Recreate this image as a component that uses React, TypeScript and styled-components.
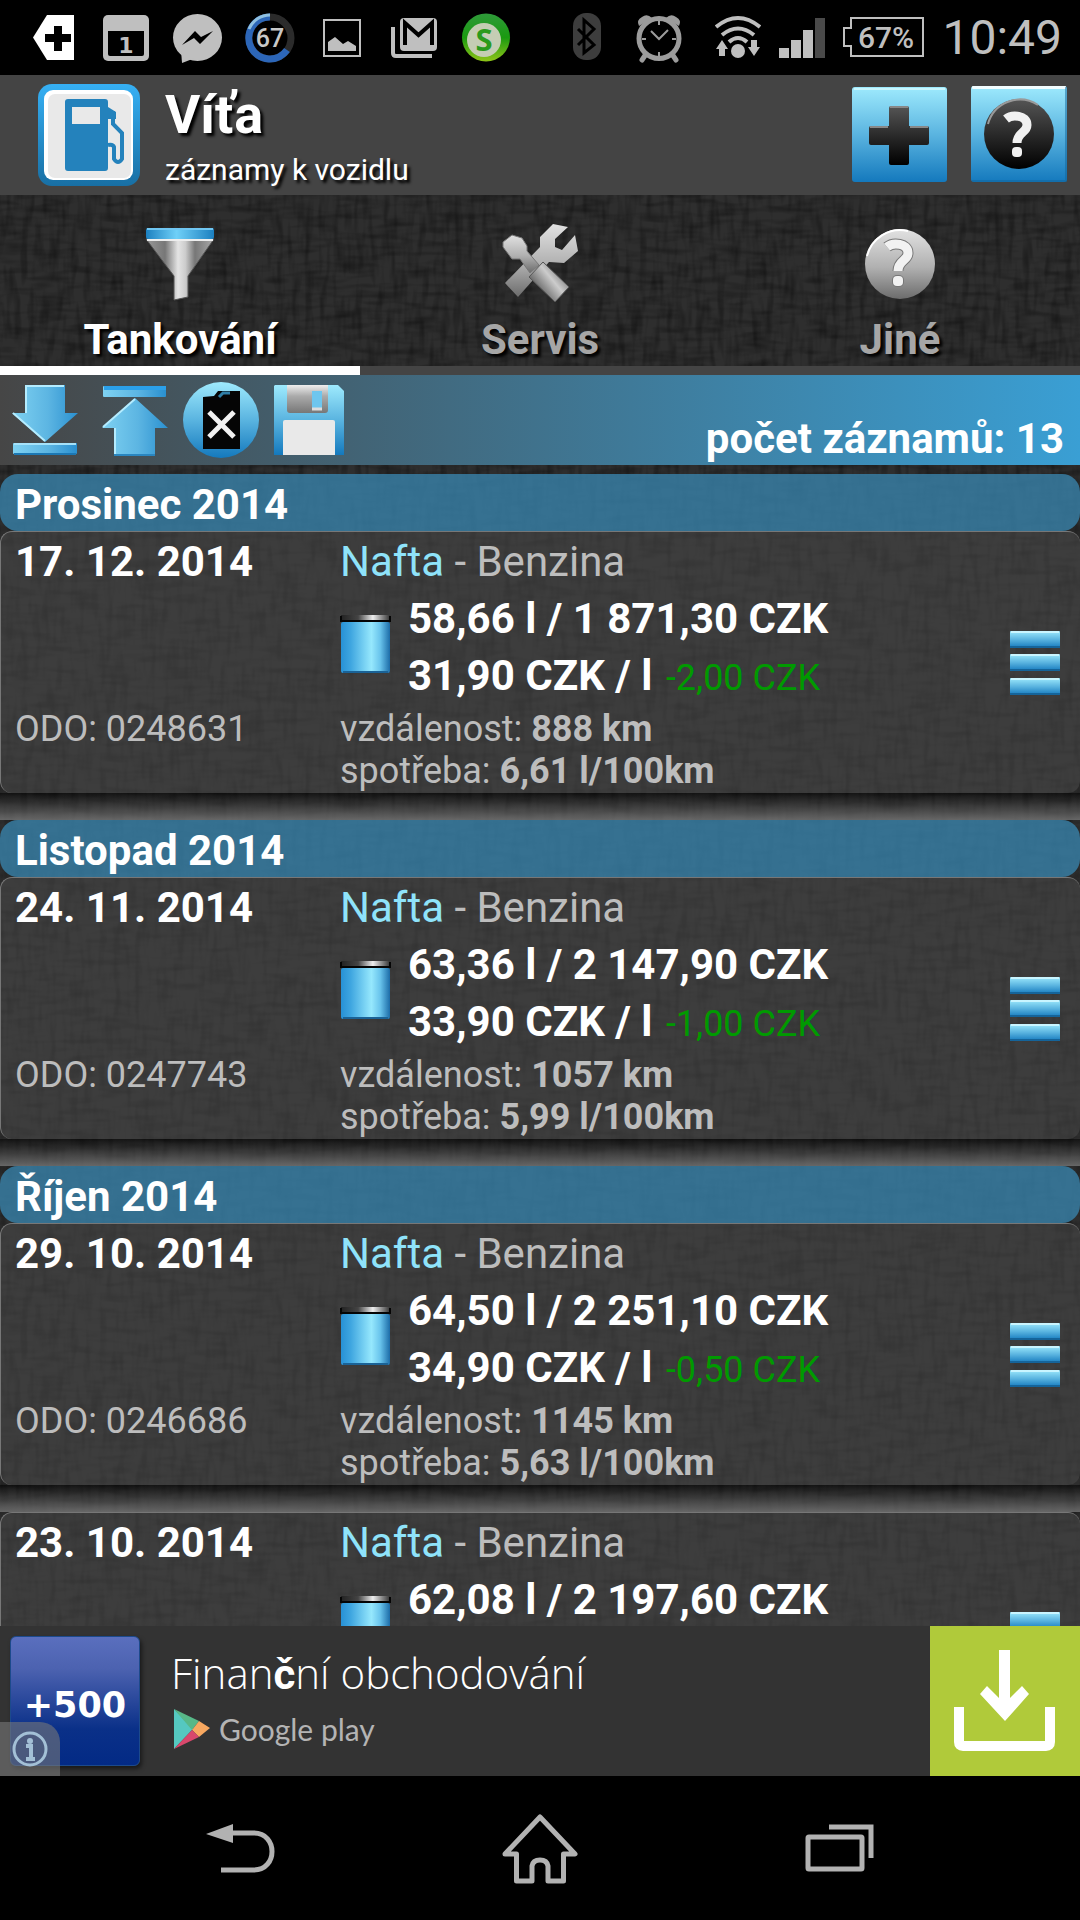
import React from "react";
import styled, { createGlobalStyle } from "styled-components";

const weave = encodeURIComponent(
  `<svg xmlns="http://www.w3.org/2000/svg" width="540" height="540">
    <filter id="h" x="0" y="0" width="100%" height="100%">
      <feTurbulence type="fractalNoise" baseFrequency="0.03 0.14" numOctaves="2" seed="4" stitchTiles="stitch"/>
      <feColorMatrix values="0 0 0 0 0  0 0 0 0 0  0 0 0 0 0  2.4 0 0 0 -1.05"/>
    </filter>
    <filter id="v" x="0" y="0" width="100%" height="100%">
      <feTurbulence type="fractalNoise" baseFrequency="0.14 0.03" numOctaves="2" seed="9" stitchTiles="stitch"/>
      <feColorMatrix values="0 0 0 0 0  0 0 0 0 0  0 0 0 0 0  2.4 0 0 0 -1.05"/>
    </filter>
    <rect width="540" height="540" fill="#2e2e2e"/>
    <rect width="540" height="540" filter="url(#h)" opacity="0.32"/>
    <rect width="540" height="540" filter="url(#v)" opacity="0.32"/>
  </svg>`
);

const GlobalStyle = createGlobalStyle`
  * { box-sizing: border-box; }
  body { margin: 0; background: #000; }
  h1, h2, p { margin: 0; font-weight: inherit; }
  button { border: 0; padding: 0; background: none; color: inherit; font: inherit; cursor: pointer; }
  svg { display: block; flex: none; }
`;

const Screen = styled.div`
  height: 100vh;
  display: flex;
  flex-direction: column;
  overflow: hidden;
  color: #fff;
  background: #2a2a2a url("data:image/svg+xml,${weave}");
  font-family: Roboto, "Noto Sans", sans-serif;
  font-size: 42px;
`;

const StatusBar = styled.div`
  flex: none;
  height: 75px;
  display: flex;
  align-items: center;
  padding: 0 18px;
  background: #000;
`;

const StatusGroup = styled.div<{ $gap: number }>`
  display: flex;
  align-items: center;
  gap: ${(p) => p.$gap}px;
`;

const SystemTray = styled.div`
  flex: 1;
  display: flex;
  justify-content: flex-end;
  gap: 33px;
`;

const Clock = styled.time`
  color: #bfbfbf;
  font-size: 48px;
  line-height: 75px;
`;

const Header = styled.header`
  flex: none;
  display: flex;
  align-items: flex-start;
  height: 120px;
  padding: 8px 13px 0 38px;
  background: #444;
`;

const Titles = styled.div`
  flex: 1;
  display: flex;
  flex-direction: column;
  gap: 5px;
  padding-left: 25px;
  text-shadow: 3px 3px 3px #000;
`;

const Title = styled.h1`
  font-size: 54px;
  line-height: 64px;
  font-weight: 700;
`;

const Subtitle = styled.p`
  font-size: 30px;
  line-height: 36px;
`;

const HeaderButton = styled.button`
  margin: 3px 0 0 24px;
`;

const Tabs = styled.nav`
  flex: none;
  display: flex;
`;

const Tab = styled.button<{ $active?: boolean }>`
  flex: 1;
  display: flex;
  flex-direction: column;
  align-items: center;
  gap: 7px;
  padding-top: 27px;
  border-bottom: 9px solid ${(p) => (p.$active ? "#fff" : "#444")};
  color: ${(p) => (p.$active ? "#fff" : "#a6a6a6")};
  font-weight: 700;
  line-height: 53px;
  text-shadow: 3px 3px 3px #000;
`;

const Toolbar = styled.div`
  flex: none;
  display: flex;
  align-items: center;
  height: 90px;
  padding: 0 16px 0 0;
  background: linear-gradient(90deg, #464646, #3a9fd4);
`;

const Count = styled.p`
  flex: 1;
  align-self: flex-end;
  text-align: right;
  font-weight: 700;
  line-height: 53px;
`;

const List = styled.main`
  flex: 1;
  min-height: 0;
  overflow: hidden;
  padding-top: 9px;
`;

const Month = styled.h2`
  padding: 4px 15px 0;
  border-radius: 18px;
  background: rgba(56, 130, 170, 0.8);
  font-size: 42px;
  font-weight: 700;
  line-height: 53px;
`;

const Card = styled.article`
  display: flex;
  min-height: 262px;
  padding: 1px 20px 1px 14px;
  border-top: 1px solid #777;
  border-left: 1px solid #777;
  border-radius: 12px;
  background: rgba(74, 74, 74, 0.55);
  color: #bdbdbd;
`;

const CardShadow = styled.div`
  height: 27px;
  background: linear-gradient(rgba(0, 0, 0, 0.55), rgba(56, 56, 56, 0.5) 38%, rgba(118, 118, 118, 0.8));
`;

const DateColumn = styled.div`
  flex: 0 0 325px;
  display: flex;
  flex-direction: column;
  justify-content: space-between;
  padding-bottom: 42px;
`;

const Strong = styled.p`
  color: #fff;
  font-weight: 700;
  line-height: 57px;
`;

const Small = styled.p`
  font-size: 36px;
  line-height: 42px;
`;

const Details = styled.div`
  flex: 1;
`;

const Station = styled.p`
  line-height: 57px;
`;

const Fuel = styled.span`
  color: #8fe3fa;
`;

const Purchase = styled.div`
  display: flex;
  gap: 14px;
  margin-bottom: 4px;
`;

const JarSlot = styled.div`
  padding-top: 22px;
`;

const Delta = styled.span`
  margin-left: 3px;
  color: #009a00;
  font-size: 36px;
  font-weight: 400;
  line-height: 36px;
`;

const MenuButton = styled.button`
  align-self: center;
`;

const Ad = styled.aside`
  position: relative;
  flex: none;
  display: flex;
  height: 150px;
  background: #333;
`;

const AdIcon = styled.div`
  display: flex;
  align-items: center;
  justify-content: center;
  width: 130px;
  height: 130px;
  margin: 10px 31px 0 10px;
  padding-top: 8px;
  border: 1px solid #1c4a8c;
  border-radius: 6px;
  background: linear-gradient(#5a6fbe 0%, #4c62b0 25%, #0a3088 72%, #032a85 100%);
  box-shadow: 2px 3px 4px rgba(0, 0, 0, 0.5);
  font-family: "DejaVu Sans", sans-serif;
  font-size: 35px;
  font-weight: 700;
`;

const AdText = styled.div`
  flex: 1;
  display: flex;
  flex-direction: column;
  gap: 6px;
  padding-top: 20px;
`;

const AdTitle = styled.p`
  font-family: "Open Sans", sans-serif;
  font-size: 42px;
  font-weight: 300;
  line-height: 54px;
`;

const Caron = styled.span`
  font-family: Roboto, sans-serif;
  font-weight: 700;
`;

const Store = styled.p`
  display: flex;
  align-items: center;
  gap: 8px;
  padding-left: 2px;
  color: #b4b4b4;
  font-family: Lato, sans-serif;
  font-size: 30px;
  line-height: 38px;
`;

const Download = styled.button`
  width: 150px;
  background: #b0ca3a;
`;

const AdInfo = styled.button`
  position: absolute;
  left: 0;
  bottom: 0;
  width: 60px;
  height: 54px;
  padding-left: 11px;
  border-radius: 0 20px 0 0;
  background: rgba(120, 120, 120, 0.6);
`;

const NavBar = styled.nav`
  flex: none;
  display: flex;
  height: 144px;
  padding: 0 90px;
  background: #000;
`;

const NavButton = styled.button`
  flex: 1;
  display: flex;
  align-items: center;
  justify-content: center;
`;

const HiddenDefs = styled.svg`
  position: absolute;
`;

/* Shared gradients for the glossy icons */
const Gradients = () => (
  <HiddenDefs width="0" height="0" aria-hidden="true">
    <defs>
      <linearGradient id="sky" x1="0" y1="0" x2="0" y2="1">
        <stop offset="0" stopColor="#9eeafd" />
        <stop offset=".5" stopColor="#5ab4e0" />
        <stop offset="1" stopColor="#1479bd" />
      </linearGradient>
      <linearGradient id="skyH" x1="0" y1="0" x2="1" y2="0">
        <stop offset="0" stopColor="#7fd2f2" />
        <stop offset=".55" stopColor="#5cb5e2" />
        <stop offset="1" stopColor="#2a90d0" />
      </linearGradient>
      <linearGradient id="jar" x1="0" y1="0" x2="1" y2="0">
        <stop offset="0" stopColor="#2791d6" />
        <stop offset=".2" stopColor="#3fa6e0" />
        <stop offset=".62" stopColor="#96e8fd" />
        <stop offset=".8" stopColor="#69c4ec" />
        <stop offset="1" stopColor="#1c6ca8" />
      </linearGradient>
      <linearGradient id="lid" x1="0" y1="0" x2="1" y2="0">
        <stop offset="0" stopColor="#222" />
        <stop offset=".35" stopColor="#444" />
        <stop offset=".65" stopColor="#eee" />
        <stop offset="1" stopColor="#333" />
      </linearGradient>
      <linearGradient id="ink" x1="0" y1="0" x2="0" y2="1">
        <stop offset="0" stopColor="#555" />
        <stop offset=".5" stopColor="#2a2a2a" />
        <stop offset="1" stopColor="#000" />
      </linearGradient>
      <linearGradient id="steelH" x1="0" y1="0" x2="1" y2="0">
        <stop offset="0" stopColor="#999" />
        <stop offset=".28" stopColor="#777" />
        <stop offset=".47" stopColor="#e4e4e4" />
        <stop offset=".58" stopColor="#ccc" />
        <stop offset=".72" stopColor="#777" />
        <stop offset="1" stopColor="#aaa" />
      </linearGradient>
      <linearGradient id="steel" x1="0" y1="0" x2="0" y2="1">
        <stop offset="0" stopColor="#e2e2e2" />
        <stop offset=".55" stopColor="#b0b0b0" />
        <stop offset="1" stopColor="#6c6c6c" />
      </linearGradient>
      <linearGradient id="handle" gradientUnits="userSpaceOnUse" x1="536" y1="290" x2="563" y2="268">
        <stop offset="0" stopColor="#5c5c5c" />
        <stop offset=".55" stopColor="#ccc" />
        <stop offset="1" stopColor="#6a6a6a" />
      </linearGradient>
      <linearGradient id="band" x1="0" y1="0" x2="1" y2="0">
        <stop offset="0" stopColor="#1c80c0" />
        <stop offset=".45" stopColor="#6fd0f8" />
        <stop offset="1" stopColor="#1c80c0" />
      </linearGradient>
      <linearGradient id="frame" x1="0" y1="0" x2="0" y2="1">
        <stop offset="0" stopColor="#36b0f4" />
        <stop offset="1" stopColor="#186fa4" />
      </linearGradient>
      <linearGradient id="shutter" x1="0" y1="0" x2="0" y2="1">
        <stop offset="0" stopColor="#eee" />
        <stop offset=".4" stopColor="#aaa" />
        <stop offset="1" stopColor="#777" />
      </linearGradient>
      <linearGradient id="lime" x1="0" y1="0" x2="0" y2="1">
        <stop offset="0" stopColor="#2f9a3a" />
        <stop offset=".5" stopColor="#1a9a10" />
        <stop offset="1" stopColor="#8fc418" />
      </linearGradient>
    </defs>
  </HiddenDefs>
);

/* Each icon is drawn in screen units; the viewBox selects its slot. */
type IconProps = { x: number; y: number; w: number; h: number; children: React.ReactNode };
const Icon = ({ x, y, w, h, children }: IconProps) => (
  <svg width={w} height={h} viewBox={`${x} ${y} ${w} ${h}`} aria-hidden="true">
    {children}
  </svg>
);

const questionPath = "M-11 -14C-5 -19 10 -18 10 -8C10 0 0 -1 0 10";

const StatusIcons = () => (
  <StatusGroup $gap={0}>
    <Icon x={18} y={0} w={72} h={75}>
      <path d="M47 15H74V60H47L33 37.500z" fill="#fff" />
      <path d="M54 26h8v8h9v8h-9v9h-8v-9h-9v-8h9z" fill="#000" />
    </Icon>
    <Icon x={90} y={0} w={72} h={75}>
      <rect x="103" y="15" width="46" height="46" rx="5" fill="#bfbfbf" />
      <path d="M108 31h36v23q0 2-2 2h-32q-2 0-2-2z" fill="#000" />
      <text x="126" y="53" textAnchor="middle" fontFamily="DejaVu Sans" fontWeight="700" fontSize="22" fill="#bfbfbf">1</text>
    </Icon>
    <Icon x={162} y={0} w={72} h={75}>
      <ellipse cx="197.500" cy="37.500" rx="24.500" ry="23.500" fill="#bfbfbf" />
      <path d="M181 50L182 63L195 58z" fill="#bfbfbf" />
      <path d="M182 45L195 31L201 37L213 31L200 44L194 38z" fill="#000" />
    </Icon>
    <Icon x={234} y={0} w={72} h={75}>
      <circle cx="270" cy="38" r="21" fill="#000" stroke="#2b2b2b" strokeWidth="7" />
      <path d="M270 17A21 21 0 1 0 287 50" fill="none" stroke="#2c66b8" strokeWidth="7" />
      <path d="M270 15A23 23 0 0 0 249 29" fill="none" stroke="#8fc0e0" strokeWidth="3" />
      <text x="270" y="47" textAnchor="middle" fontFamily="Roboto" fontSize="25" fontWeight="500" fill="#c8c8c8">67</text>
    </Icon>
    <Icon x={306} y={0} w={72} h={75}>
      <rect x="324" y="20" width="36" height="36" fill="none" stroke="#bfbfbf" strokeWidth="2" />
      <path d="M328 51V42L335 37L343 44L348 41L356 46V51z" fill="#bfbfbf" />
    </Icon>
    <Icon x={378} y={0} w={72} h={75}>
      <path d="M393 27V53q0 3 3 3H432" fill="none" stroke="#bfbfbf" strokeWidth="4" />
      <rect x="400" y="18" width="37" height="33" rx="4" fill="#bfbfbf" />
      <path d="M405 45V23L418.500 35L432 23V45" fill="none" stroke="#000" strokeWidth="4" />
    </Icon>
    <Icon x={450} y={0} w={72} h={75}>
      <circle cx="486" cy="37.500" r="24" fill="url(#lime)" />
      <circle cx="484" cy="40" r="17" fill="#c5cdb4" />
      <text x="484" y="51" textAnchor="middle" fontFamily="Open Sans" fontWeight="700" fontSize="31" fill="#2a9a1c">S</text>
    </Icon>
  </StatusGroup>
);

const SystemIcons = () => (
  <SystemTray>
    <StatusGroup $gap={35}>
      <Icon x={570} y={0} w={28} h={75}>
        <rect x="570" y="13" width="28" height="47" rx="13" fill="#3d3d3d" />
        <path d="M575 29L591 45L581 53V20L591 29L575 45" fill="none" stroke="#000" strokeWidth="3" />
      </Icon>
      <Icon x={633} y={0} w={46} h={75}>
        <path d="M636 26q-3-6 3-9q5-4 10 1zM676 26q3-6-3-9q-5-4-10 1z" fill="#9c9c9c" />
        <circle cx="656" cy="38.500" r="20" fill="none" stroke="#9c9c9c" strokeWidth="5" />
        <path d="M643 54l-4 6M669 54l4 6" stroke="#9c9c9c" strokeWidth="5" strokeLinecap="round" />
        <path d="M648 31l8 8l9-9M656 21v4M656 52v4M639 39h4M669 39h4" fill="none" stroke="#9c9c9c" strokeWidth="2" />
      </Icon>
    </StatusGroup>
    <StatusGroup $gap={18}>
      <Icon x={712} y={0} w={46} h={75}>
        <path d="M713 27Q735 9 757 27M719 35Q735 22 751 35M726 42Q735 34 744 42" fill="none" stroke="#bfbfbf" strokeWidth="4" />
        <circle cx="735" cy="51" r="7" fill="#bfbfbf" />
        <path d="M719 40l6 9h-3v7h-6v-7h-3zM751 56l6-9h-3v-7h-6v7h-3z" fill="#bfbfbf" />
      </Icon>
      <Icon x={777} y={0} w={46} h={75}>
        <path d="M777 48h10v10h-10zM789 40h10v18h-10zM801 30h10v28h-10z" fill="#bfbfbf" />
        <path d="M813 18h10v40h-10z" fill="#4a4a4a" />
      </Icon>
      <Icon x={841} y={0} w={99} h={75}>
        <path d="M849 18H921V56H849V46H842V28H849z" fill="none" stroke="#bfbfbf" strokeWidth="2" />
        <text x="884" y="48" textAnchor="middle" fontFamily="Roboto" fontWeight="500" fontSize="30" fill="#bfbfbf">67%</text>
      </Icon>
      </StatusGroup>
  </SystemTray>
);

const PumpLogo = () => (
  <Icon x={39} y={83} w={102} h={104}>
    <rect x="39" y="84" width="102" height="102" rx="14" fill="url(#frame)" />
    <rect x="45" y="90" width="89" height="90" rx="9" fill="#fff" />
    <rect x="49" y="94" width="83" height="84" rx="7" fill="#e9e9e9" />
    <path fillRule="evenodd" d="M69 99H106q3 0 3 3V168q0 3-3 3H69q-3 0-3-3V102q0-3 3-3zM73 107V124H101V107z" fill="#2482bc" />
    <path d="M109 113H114V124L123 133V159Q119 165 115 159V147Q114 144 109 145" fill="none" stroke="#2482bc" strokeWidth="4" />
    <path d="M109 107L117 112V119H109z" fill="#2482bc" />
  </Icon>
);

const PlusTile = () => (
  <Icon x={852} y={86} w={95} h={96}>
    <rect x="852" y="87" width="95" height="95" rx="3" fill="url(#sky)" />
    <rect x="854" y="88" width="91" height="2" fill="#c8f6ff" />
    <path d="M890 106H907q2 0 2 2V126H927q2 0 2 2V143q0 2-2 2H909V163q0 2-2 2H891q-2 0-2-2V145H871q-2 0-2-2V128q0-2 2-2H889V108q0-2 2-2z" fill="url(#ink)" />
    <path d="M890 107H908M870 127H888M910 127H928" stroke="#888" strokeWidth="2" />
  </Icon>
);

const HelpTile = () => (
  <Icon x={971} y={86} w={96} h={96}>
    <rect x="971" y="86" width="96" height="96" rx="3" fill="url(#sky)" />
    <rect x="972" y="86" width="94" height="3" rx="1" fill="#f2fdff" />
    <path d="M1066 87V181H972" fill="none" stroke="#126399" strokeWidth="2" opacity=".5" />
    <circle cx="1019" cy="134" r="35" fill="url(#ink)" />
    <path d="M988 124A33 33 0 0 1 1038 105" fill="none" stroke="#999" strokeWidth="2" />
    <g transform="translate(1017 133)">
      <path d={questionPath} fill="none" stroke="#f1f1f1" strokeWidth="9" />
      <rect x="-5" y="14" width="10" height="10" rx="4" fill="#f1f1f1" />
    </g>
  </Icon>
);

const Funnel = () => (
  <Icon x={138} y={222} w={84} h={84}>
    <path d="M146 239H214L188 276V297L174 300V276z" fill="url(#steelH)" stroke="#555" strokeWidth="1" />
    <path d="M147 240H213" stroke="#eee" strokeWidth="2" />
    <rect x="146" y="228" width="68" height="11" rx="2" fill="url(#band)" />
    <path d="M147 229H213" stroke="#6fc6f2" strokeWidth="2" />
  </Icon>
);

const Tools = () => (
  <Icon x={498} y={222} w={84} h={84}>
    <path d="M553 224L568 227L555 239V247L562 250L575 235L578 251L564 263L549 262L518 297L505 283L540 247V237z" fill="url(#steel)" />
    <path d="M512 235L522 238L527 246V251L539 265L530 273L520 259H512L503 247V242z" fill="url(#steel)" stroke="#777" strokeWidth="1" />
    <path d="M543 262L569 287L555 302L529 277z" fill="url(#handle)" stroke="#555" strokeWidth="1" />
  </Icon>
);

const OtherBadge = () => (
  <Icon x={858} y={222} w={84} h={84}>
    <circle cx="900" cy="264" r="35" fill="url(#steel)" />
    <path d="M867 256A34 34 0 0 1 908 231" fill="none" stroke="#fff" strokeWidth="2" />
    <g transform="translate(898 261)">
      <path d={questionPath} fill="none" stroke="#777" strokeWidth="11" />
      <rect x="-6" y="14" width="12" height="12" rx="5" fill="#777" />
      <path d={questionPath} fill="none" stroke="#f2f2f2" strokeWidth="9" />
      <rect x="-5" y="15" width="10" height="10" rx="4" fill="#f2f2f2" />
    </g>
  </Icon>
);

const ArrowDown = () => (
  <Icon x={0} y={375} w={90} h={90}>
    <path d="M25 385H65V413H78L45 442L12 413H25z" fill="url(#skyH)" />
    <path d="M26 413V386H64M13 413L45 441" fill="none" stroke="#b4ecff" strokeWidth="2" />
    <rect x="13" y="443" width="64" height="11" rx="1" fill="url(#skyH)" />
    <path d="M14 444H76" stroke="#a5e2fa" strokeWidth="2" />
    <path d="M14 454H76" stroke="#1c78b4" strokeWidth="2" />
  </Icon>
);

const ArrowUp = () => (
  <Icon x={90} y={375} w={90} h={90}>
    <rect x="103" y="386" width="63" height="11" rx="1" fill="url(#skyH)" />
    <path d="M104 388H166" stroke="#2ba0ea" strokeWidth="4" />
    <path d="M135 398L168 428H155V455H114V428H102z" fill="url(#skyH)" />
    <path d="M103 427L135 399M115 428V454" fill="none" stroke="#b4ecff" strokeWidth="2" />
    <path d="M114 455H155" stroke="#2a86c0" strokeWidth="2" />
  </Icon>
);

const Canister = () => (
  <Icon x={180} y={375} w={88} h={90}>
    <circle cx="221" cy="420" r="38" fill="url(#sky)" />
    <path d="M203 397L214 396L218 391H240V449H203z" fill="#050505" />
    <path d="M219 397L223 393H230" fill="none" stroke="#2f7fa8" strokeWidth="3" />
    <path d="M209 412L234 437M234 412L209 437" stroke="#f2f2f2" strokeWidth="5" />
  </Icon>
);

const Floppy = () => (
  <Icon x={268} y={375} w={84} h={90}>
    <path d="M275 385H338L344 391V455H274V386z" fill="url(#sky)" />
    <path d="M287 385H328V410q0 3-3 3H290q-3 0-3-3z" fill="url(#shutter)" />
    <rect x="312" y="391" width="10" height="17" fill="#6ec6ee" />
    <path d="M312 409H322" stroke="#ddd" strokeWidth="3" />
    <path d="M283 455V422q0-2 2-2H333q2 0 2 2V455z" fill="#e9e9e9" />
  </Icon>
);

const Jar = () => (
  <Icon x={341} y={612} w={54} h={66}>
    <rect x="342" y="615" width="49" height="7" fill="url(#lid)" />
    <path d="M342 616V621H391V616" fill="none" stroke="#050505" strokeWidth="2" />
    <rect x="342" y="622" width="49" height="51" rx="2" fill="url(#jar)" />
    <path d="M344 672H389" stroke="#1a6296" strokeWidth="2" />
  </Icon>
);

const Bars = () => (
  <Icon x={1010} y={630} w={50} h={64}>
    {[630, 653, 677].map((y) => (
      <g key={y}>
        <rect x="1010" y={y} width="50" height="17" rx="1" fill="url(#sky)" />
        <rect x="1011" y={y} width="48" height="2" fill="#c9f5ff" />
        <rect x="1010" y={y + 15} width="50" height="2" fill="#15649a" />
      </g>
    ))}
  </Icon>
);

type Fill = {
  month?: string;
  date: string;
  total: string;
  unit?: string;
  delta?: string;
  odo?: string;
  distance?: string;
  usage?: string;
};

const fills: Fill[] = [
  { month: "Prosinec 2014", date: "17. 12. 2014", total: "58,66 l / 1 871,30 CZK", unit: "31,90 CZK / l", delta: "-2,00 CZK", odo: "0248631", distance: "888 km", usage: "6,61 l/100km" },
  { month: "Listopad 2014", date: "24. 11. 2014", total: "63,36 l / 2 147,90 CZK", unit: "33,90 CZK / l", delta: "-1,00 CZK", odo: "0247743", distance: "1057 km", usage: "5,99 l/100km" },
  { month: "Říjen 2014", date: "29. 10. 2014", total: "64,50 l / 2 251,10 CZK", unit: "34,90 CZK / l", delta: "-0,50 CZK", odo: "0246686", distance: "1145 km", usage: "5,63 l/100km" },
  { date: "23. 10. 2014", total: "62,08 l / 2 197,60 CZK" },
];

const FillCard = ({ fill }: { fill: Fill }) => (
  <section>
    {fill.month && <Month>{fill.month}</Month>}
    <Card>
      <DateColumn>
        <Strong>{fill.date}</Strong>
        {fill.odo && <Small>ODO: {fill.odo}</Small>}
      </DateColumn>
      <Details>
        <Station>
          <Fuel>Nafta</Fuel> - Benzina
        </Station>
        <Purchase>
          <JarSlot>
            <Jar />
          </JarSlot>
          <div>
            <Strong>{fill.total}</Strong>
            {fill.unit && (
              <Strong>
                {fill.unit} <Delta>{fill.delta}</Delta>
              </Strong>
            )}
          </div>
        </Purchase>
        {fill.distance && <Small>vzdálenost: <b>{fill.distance}</b></Small>}
        {fill.usage && <Small>spotřeba: <b>{fill.usage}</b></Small>}
      </Details>
      <MenuButton aria-label="Menu">
        <Bars />
      </MenuButton>
    </Card>
    <CardShadow />
  </section>
);

export default function App() {
  return (
    <Screen>
      <GlobalStyle />
      <Gradients />
      <StatusBar>
        <StatusIcons />
        <SystemIcons />
        <Clock>10:49</Clock>
      </StatusBar>
      <Header>
        <PumpLogo />
        <Titles>
          <Title>Víťa</Title>
          <Subtitle>záznamy k vozidlu</Subtitle>
        </Titles>
        <HeaderButton aria-label="Přidat"><PlusTile /></HeaderButton>
        <HeaderButton aria-label="Nápověda"><HelpTile /></HeaderButton>
      </Header>
      <Tabs>
        <Tab $active><Funnel />Tankování</Tab>
        <Tab><Tools />Servis</Tab>
        <Tab><OtherBadge />Jiné</Tab>
      </Tabs>
      <Toolbar>
        <button aria-label="Dolů"><ArrowDown /></button>
        <button aria-label="Nahoru"><ArrowUp /></button>
        <button aria-label="Nádrž"><Canister /></button>
        <button aria-label="Uložit"><Floppy /></button>
        <Count>počet záznamů: 13</Count>
      </Toolbar>
      <List>
        {fills.map((fill) => (
          <FillCard key={fill.date} fill={fill} />
        ))}
      </List>
      <Ad>
        <AdIcon>+500</AdIcon>
        <AdText>
          <AdTitle>Finan<Caron>č</Caron>ní obchodování</AdTitle>
          <Store>
            <Icon x={176} y={1708} w={38} h={42}>
              <path d="M177 1709V1749L196 1729z" fill="#55c8c0" />
              <path d="M177 1709L202 1721L195 1730z" fill="#58b888" />
              <path d="M202 1721L213 1728L202 1737L195 1730z" fill="#f8a860" />
              <path d="M177 1749L202 1737L195 1730z" fill="#d8486c" />
            </Icon>
            Google play
          </Store>
        </AdText>
        <Download aria-label="Stáhnout">
          <Icon x={930} y={1626} w={150} h={150}>
            <path d="M999 1650h11v48l12-12l7 8l-24 27l-25-27l7-8l12 12z" fill="#fff" />
            <path d="M959 1707V1742q0 4 4 4H1046q4 0 4-4V1707" fill="none" stroke="#fff" strokeWidth="10" />
          </Icon>
        </Download>
        <AdInfo aria-label="Informace o reklamě">
          <Icon x={11} y={1730} w={38} h={38}>
            <circle cx="30" cy="1749" r="16" fill="none" stroke="#a3c0d6" strokeWidth="3" />
            <circle cx="30" cy="1741" r="3" fill="#a3c0d6" />
            <path d="M26 1746H31V1758M26 1759H35" fill="none" stroke="#a3c0d6" strokeWidth="4" />
          </Icon>
        </AdInfo>
      </Ad>
      <NavBar>
        <NavButton aria-label="Zpět">
          <Icon x={206} y={1800} w={70} h={96}>
            <path d="M207 1834L234 1824V1843z" fill="#b2b2b2" />
            <path d="M232 1833H255C279 1833 279 1870 255 1870H222" fill="none" stroke="#b2b2b2" strokeWidth="5" />
          </Icon>
        </NavButton>
        <NavButton aria-label="Domů">
          <Icon x={500} y={1800} w={80} h={96}>
            <path d="M540 1817L575 1854H563.500V1881H548V1866Q547 1860 540 1860Q533 1860 532 1866V1881H516.500V1854H505z" fill="none" stroke="#b2b2b2" strokeWidth="5" strokeLinejoin="round" />
          </Icon>
        </NavButton>
        <NavButton aria-label="Poslední aplikace">
          <Icon x={805} y={1800} w={70} h={96}>
            <rect x="808" y="1837" width="54" height="32" rx="1" fill="none" stroke="#b2b2b2" strokeWidth="5" />
            <path d="M829 1827H871V1858" fill="none" stroke="#b2b2b2" strokeWidth="5" />
          </Icon>
        </NavButton>
      </NavBar>
    </Screen>
  );
}
